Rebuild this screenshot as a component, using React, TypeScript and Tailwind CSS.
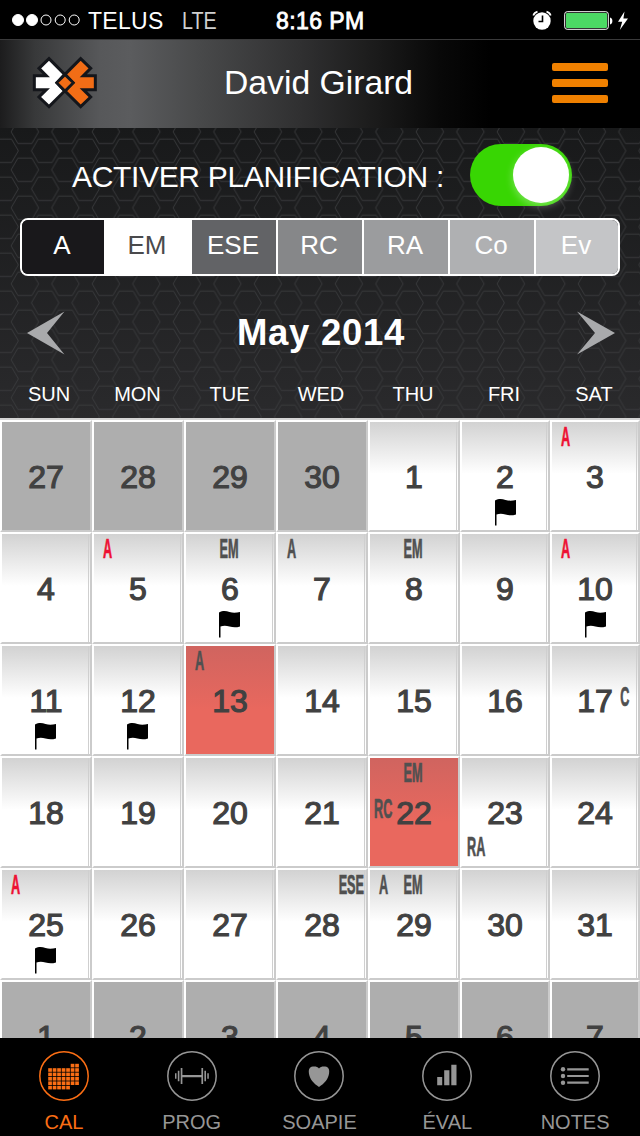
import React from 'react';

type Mark = { text: string; pos: 'tl' | 'top' | 'tr' | 'left' | 'right' | 'bl'; red?: boolean };
type Day = { day: number; other?: boolean; selected?: boolean; flag?: boolean; marks?: Mark[] };

const weekDays = ['SUN', 'MON', 'TUE', 'WED', 'THU', 'FRI', 'SAT'];

const segments = [
  { label: 'A', style: 'w-[82px] bg-[#19181b] text-white' },
  { label: 'EM', style: 'w-[86px] bg-white text-[#4a4a4c]' },
  { label: 'ESE', style: 'w-[86px] bg-[#626366] text-white' },
  { label: 'RC', style: 'w-[86px] bg-[#868789] text-white' },
  { label: 'RA', style: 'w-[86px] bg-[#9b9c9e] text-white' },
  { label: 'Co', style: 'w-[86px] bg-[#afb0b2] text-white' },
  { label: 'Ev', style: 'w-[84px] bg-[#c4c5c7] text-white' },
];

const days: Day[] = [
  { day: 27, other: true },
  { day: 28, other: true },
  { day: 29, other: true },
  { day: 30, other: true },
  { day: 1 },
  { day: 2, flag: true },
  { day: 3, marks: [{ text: 'A', pos: 'tl', red: true }] },
  { day: 4 },
  { day: 5, marks: [{ text: 'A', pos: 'tl', red: true }] },
  { day: 6, flag: true, marks: [{ text: 'EM', pos: 'top' }] },
  { day: 7, marks: [{ text: 'A', pos: 'tl' }] },
  { day: 8, marks: [{ text: 'EM', pos: 'top' }] },
  { day: 9 },
  { day: 10, flag: true, marks: [{ text: 'A', pos: 'tl', red: true }] },
  { day: 11, flag: true },
  { day: 12, flag: true },
  { day: 13, selected: true, marks: [{ text: 'A', pos: 'tl' }] },
  { day: 14 },
  { day: 15 },
  { day: 16 },
  { day: 17, marks: [{ text: 'C', pos: 'right' }] },
  { day: 18 },
  { day: 19 },
  { day: 20 },
  { day: 21 },
  { day: 22, selected: true, marks: [{ text: 'EM', pos: 'top' }, { text: 'RC', pos: 'left' }] },
  { day: 23, marks: [{ text: 'RA', pos: 'bl' }] },
  { day: 24 },
  { day: 25, flag: true, marks: [{ text: 'A', pos: 'tl', red: true }] },
  { day: 26 },
  { day: 27 },
  { day: 28, marks: [{ text: 'ESE', pos: 'tr' }] },
  { day: 29, marks: [{ text: 'A', pos: 'tl' }, { text: 'EM', pos: 'top' }] },
  { day: 30 },
  { day: 31 },
  { day: 1, other: true },
  { day: 2, other: true },
  { day: 3, other: true },
  { day: 4, other: true },
  { day: 5, other: true },
  { day: 6, other: true },
  { day: 7, other: true },
];

const markPos = {
  tl: 'left-[9px] top-[5px] origin-left',
  top: 'left-[43px] top-[5px] -translate-x-1/2 origin-center',
  tr: 'right-[2px] top-[5px] origin-right',
  left: 'left-[4px] top-[41px] origin-left',
  right: 'right-[9px] top-[41px] origin-right',
  bl: 'left-[5px] top-[79px] origin-left',
};

function StatusBar() {
  return (
    <div className="h-[39px] bg-black flex items-center text-[23px] leading-none relative">
      <svg width="70" height="14" className="ml-3 shrink-0" fill="none" stroke="#fff" strokeWidth="1">
        <circle cx="6" cy="7" r="5.5" fill="#fff" />
        <circle cx="20" cy="7" r="5.5" fill="#fff" />
        <circle cx="34" cy="7" r="5" />
        <circle cx="48.2" cy="7" r="5" />
        <circle cx="62.2" cy="7" r="5" />
      </svg>
      <span className="ml-[6px] pt-[3px] w-[94px] tracking-[0.3px]">TELUS</span>
      <span className="pt-[3px] w-[94px] text-[#d0d0d0] scale-x-[0.86] origin-left">LTE</span>
      <span className="pt-[3px] tracking-[0.4px] [-webkit-text-stroke:0.8px_#fff]">8:16 PM</span>
      <svg width="100" height="24" className="ml-auto mr-[8px] shrink-0" fill="none">
        <circle cx="10" cy="13" r="8.7" fill="#fff" />
        <path d="M10.5 7.5v6H6.5" stroke="#000" strokeWidth="1.6" />
        <path d="M1.3 7.5A6 6 0 0 1 5.5 3.6M14.5 3.6a6 6 0 0 1 4.2 3.9" stroke="#fff" strokeWidth="1.7" />
        <rect x="32.7" y="3.7" width="43.6" height="17.6" rx="2.5" stroke="#fff" strokeWidth="1" />
        <rect x="34" y="5" width="41" height="15" rx="1" fill="#4cd964" />
        <path d="M78 9.5c3.2.6 3.2 6.4 0 7z" fill="#fff" />
        <path d="M92.500 3.500l-6.500 10.200h4.200L87.800 22l8.200-11.500h-4.600z" fill="#fff" />
      </svg>
    </div>
  );
}

function Logo() {
  return (
    <svg width="66" height="54" viewBox="97 169 198 162" stroke="#14161b" strokeWidth="9">
      <path d="M148 177l47 47-23 25 23 25-47 47-30-29 22-22h-36v-42h36l-22-22z" fill="#fff" />
      <path d="M243 177l-47 47 24 25-24 25 47 47 30-29-22-22h36v-42h-36l22-22z" fill="#f26d16" />
      <path d="M196 225l25 24-25 25-25-25z" fill="#f26d16" strokeWidth="8" />
    </svg>
  );
}

function Header() {
  return (
    <div className="h-[89px] border-t border-[#3a3a3b] bg-[linear-gradient(to_right,#1c1c1d_0px,#38393a_35px,#57585a_100px,#5b5c5e_130px,#48494a_200px,#303031_300px,#1b1b1b_375px,#080808_440px,#000_490px)] flex items-center px-[32px] pb-[2px]">
      <Logo />
      <h1 className="ml-[126px] text-[33.7px] leading-none">David Girard</h1>
      <div className="ml-auto flex flex-col gap-2 w-14">
        <div className="h-2 rounded-[2px] bg-[#ef8000]" />
        <div className="h-2 rounded-[2px] bg-[#ef8000]" />
        <div className="h-2 rounded-[2px] bg-[#ef8000]" />
      </div>
    </div>
  );
}

function HexBackground() {
  return (
    <svg className="absolute inset-0" width="640" height="290">
      <defs>
        <pattern id="hex" x="146.4" y="155.8" width="40.5" height="38" patternUnits="userSpaceOnUse">
          <g fill="none" stroke="#3a3b3d" strokeWidth="0.9">
            <path d="M6.500 19l6.800-11.700h13.900l6.800 11.700-6.800 11.700H13.300z" />
            <path d="M-13.750 0l6.800-11.700h13.900l6.800 11.700-6.800 11.700h-13.900zM26.750 0l6.800-11.700h13.900l6.800 11.700-6.800 11.700h-13.900z" />
            <path d="M-13.750 38l6.800-11.700h13.900l6.800 11.700-6.800 11.700h-13.900zM26.750 38l6.800-11.700h13.900l6.800 11.700-6.800 11.700h-13.900z" />
          </g>
        </pattern>
      </defs>
      <rect width="640" height="290" fill="url(#hex)" />
    </svg>
  );
}

function Flag() {
  return (
    <svg width="23" height="28" viewBox="0 0 23 28" className="absolute left-[32px] top-[76px]">
      <path d="M1 2.5C5 .3 8 .8 11.5 2c4 1.2 7 .6 10.500.1v14.4c-4 1.2-7 1-10.500 0-4-1.100-6.500-.8-9 .1V27.500H1z" fill="#000" />
    </svg>
  );
}

function DayCell({ day, other, selected, flag, marks }: Day) {
  const bg = other
    ? 'bg-[#aeaeae]'
    : selected
      ? 'bg-[linear-gradient(#d0645f,#e9685e_60%)]'
      : 'bg-[linear-gradient(#d2d2d2,#fff_48%)]';
  return (
    <div className="border-t-2 border-l-2 border-t-white border-l-white border-r-2 border-b-2 border-r-[#cbcbcb] border-b-[#cbcbcb]">
      <div className={`relative h-full flex justify-center ${bg}`}>
        {!other && !selected && (
          <div className="absolute right-px top-0 bottom-0 w-px bg-[#cfcfcf]" />
        )}
        <span className="pt-[37px] text-[32px] leading-[36px] text-[#414141] [-webkit-text-stroke:1.2px_#414141]">
          {day}
        </span>
        {marks?.map((m) => (
          <span
            key={m.pos}
            className={`absolute text-[27px] leading-[20px] font-bold scale-x-[0.47] [-webkit-text-stroke:0.7px_currentColor] ${markPos[m.pos]} ${m.red ? 'text-[#ee1133]' : 'text-[#505050]'}`}
          >
            {m.text}
          </span>
        ))}
        {flag && <Flag />}
      </div>
    </div>
  );
}

function CalIcon() {
  return (
    <>
      {[0, 1, 2, 3, 4, 5, 6].map((c) =>
        [0, 1, 2, 3, 4].map((r) => (
          <rect
            key={`${c}-${r}`}
            x={9.2 + c * 4.5}
            y={(c > 4 ? 12.8 : 17.2) + r * 4.4}
            width="3.7"
            height="3.6"
            fill="currentColor"
          />
        ))
      )}
    </>
  );
}

const tabs = [
  { label: 'CAL', active: true, icon: <CalIcon /> },
  {
    label: 'PROG',
    icon: (
      <path
        d="M15 24h19.5v2.2H15zM13.7 17h1.7v16h-1.7zM10.8 19.7h1.6v10.6h-1.6zM8 22.2h1.5v5.6H8zM34.4 17h1.7v16h-1.7zM37.4 19.7H39v10.6h-1.6zM40.3 22.2h1.5v5.6h-1.5z"
        fill="currentColor"
      />
    ),
  },
  {
    label: 'SOAPIE',
    icon: (
      <path
        d="M25 17.4c1.7-2 4.5-2.4 7.5-1.6 2.5.8 3 3.5 2.6 6.5C34.4 28 30.5 32.5 25 36c-5.5-3.5-9.4-8-10.1-13.7-.4-3 .1-5.7 2.6-6.5 3-.8 5.8-.4 7.5 1.6z"
        fill="currentColor"
      />
    ),
  },
  {
    label: 'ÉVAL',
    icon: <path d="M15.2 26h5v8.300h-5zM22.2 19.2h5.200v15.100h-5.200zM29.3 13.8h5.200v20.500h-5.200z" fill="currentColor" />,
  },
  {
    label: 'NOTES',
    icon: (
      <g fill="currentColor">
        <circle cx="13" cy="18.3" r="2.2" />
        <circle cx="13" cy="25" r="2.2" />
        <circle cx="13" cy="31.7" r="2.2" />
        <path d="M17.2 17.2h21.5v2.2H17.2zM17.2 23.9h21.5v2.2H17.2zM17.2 30.6h21.5v2.2H17.2z" />
      </g>
    ),
  },
];

export default function App() {
  return (
    <div className="w-[640px] h-[1136px] overflow-hidden flex flex-col bg-black text-white font-['Liberation_Sans',Arial,sans-serif]">
      <StatusBar />
      <Header />

      {/* planning controls */}
      <div className="relative h-[290px] shrink-0 bg-[linear-gradient(#18191a,#2a2a2c)]">
        <HexBackground />
        <div className="relative">
          <div className="flex items-center justify-between pt-4 pl-[72px] pr-[68px]">
            <span className="text-[30px] leading-none pt-[3px] whitespace-nowrap tracking-[-0.33px]">ACTIVER PLANIFICATION :</span>
            <div className="w-[102px] h-[62px] rounded-full bg-[#38d603] flex items-center justify-end pr-[3px]">
              <div className="size-14 rounded-full bg-white shadow-[0_3px_8px_rgba(255,255,255,0.35)]" />
            </div>
          </div>

          <div className="mt-3 mx-5 h-[58px] flex rounded-[8px] border-2 border-white overflow-hidden">
            {segments.map((s, i) => (
              <div
                key={s.label}
                className={`flex items-center justify-center text-[26px] leading-none pb-[4px] pr-[2px] border-white ${i > 0 ? 'border-l-2' : ''} ${s.style}`}
              >
                {s.label}
              </div>
            ))}
          </div>

          <div className="mt-[32px] pl-[27px] pr-[25px] h-[50px] flex items-center justify-between">
            <svg width="39" height="44">
              <path d="M0 22L37.5.5 20 22l17.500 21.500z" fill="#a9aaac" />
            </svg>
            <h2 className="text-[36.500px] font-bold leading-none tracking-[0.7px]">May 2014</h2>
            <svg width="39" height="44">
              <path d="M39 22L1 .5 19 22 1 43.500z" fill="#a9aaac" />
            </svg>
          </div>

          <div className="mt-[26px] pl-[6px] grid grid-cols-[86px_91px_93px_90px_94px_88px_92px] text-[20px] leading-none text-center">
            {weekDays.map((d) => (
              <span key={d}>{d}</span>
            ))}
          </div>
        </div>
      </div>

      {/* month grid, last row runs under the tab bar */}
      <div className="h-[620px] shrink-0 overflow-hidden border-t-2 border-[#d4d4d4]">
        <div className="grid grid-cols-[repeat(5,92px)_90px_90px] auto-rows-[112px]">
          {days.map((d, i) => (
            <DayCell key={i} {...d} />
          ))}
        </div>
      </div>

      <div className="h-[98px] shrink-0 bg-black grid grid-cols-5 pr-px">
        {tabs.map((t) => (
          <div
            key={t.label}
            className={`flex flex-col items-center pt-[13px] ${t.active ? 'text-[#fb6e14]' : 'text-[#969696]'}`}
          >
            <svg width="50" height="50" viewBox="0 0 50 50" fill="none">
              <circle cx="25" cy="25" r="24.2" stroke="currentColor" strokeWidth="1.5" />
              {t.icon}
            </svg>
            <span className="mt-[11px] text-[20px] leading-none">{t.label}</span>
          </div>
        ))}
      </div>
    </div>
  );
}
